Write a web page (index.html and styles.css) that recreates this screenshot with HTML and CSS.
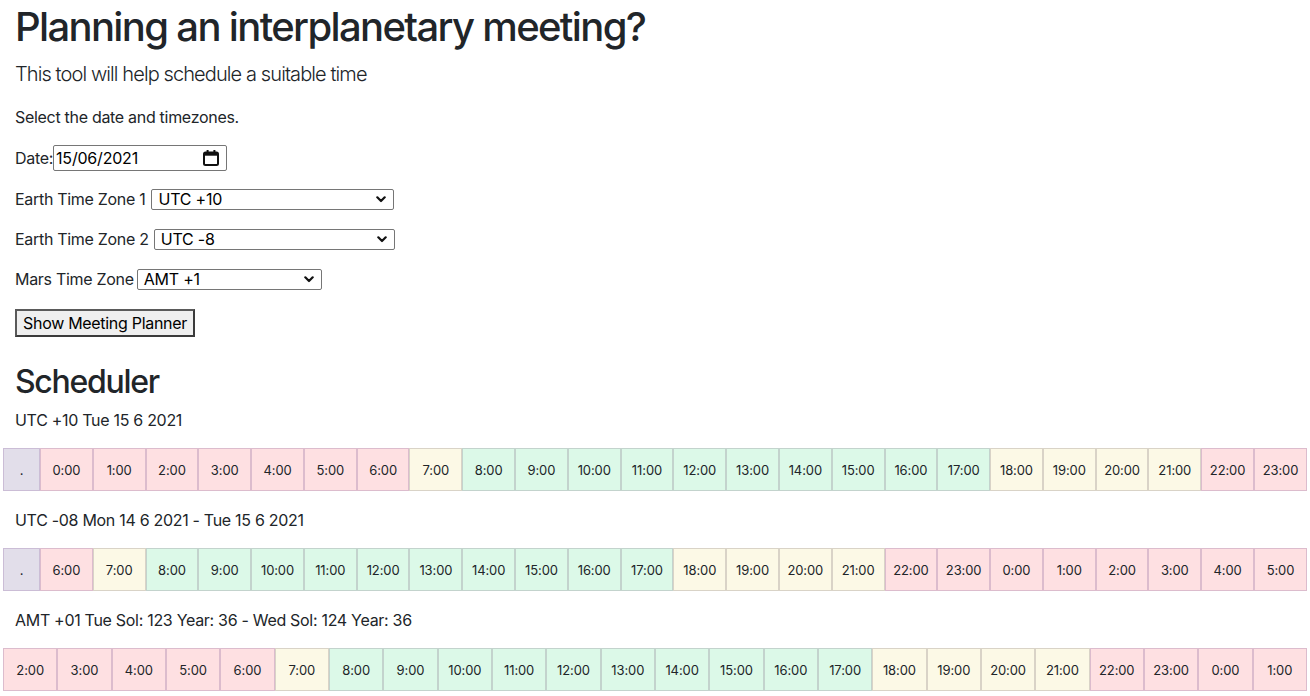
FILE: index.html
```html
<!DOCTYPE html>
<html lang="en">
<head>
<meta charset="utf-8">
<title>Interplanetary Meeting Planner</title>
<link rel="stylesheet" href="styles.css">
</head>
<body>
<main class="page">
  <section class="intro">
    <h1 class="title">Planning an interplanetary meeting?</h1>
    <p class="lead">This tool will help schedule a suitable time</p>
    <p class="text">Select the date and timezones.</p>
    <p class="field field-date"><span class="label">Date:</span><span class="date-input"><span class="date-value">15/06/2021</span><svg class="cal" width="18" height="18" viewBox="0 0 18 18"><rect x="2" y="3.5" width="14" height="12.5" rx="1.5" fill="none" stroke="#111" stroke-width="2"/><rect x="2" y="3.5" width="14" height="3.2" fill="#111"/><rect x="4.6" y="1" width="2" height="3.5" fill="#111"/><rect x="11.4" y="1" width="2" height="3.5" fill="#111"/></svg></span></p>
    <p class="field field-tz1"><span class="label">Earth Time Zone 1</span><span class="select sel-1"><span class="sel-value">UTC +10</span><svg class="chev" width="10" height="7" viewBox="0 0 10 7"><path d="M1.3 1.3 L5 5 L8.7 1.3" fill="none" stroke="#111" stroke-width="2.2" stroke-linecap="round" stroke-linejoin="round"/></svg></span></p>
    <p class="field"><span class="label">Earth Time Zone 2</span><span class="select sel-2"><span class="sel-value">UTC -8</span><svg class="chev" width="10" height="7" viewBox="0 0 10 7"><path d="M1.3 1.3 L5 5 L8.7 1.3" fill="none" stroke="#111" stroke-width="2.2" stroke-linecap="round" stroke-linejoin="round"/></svg></span></p>
    <p class="field field-mars"><span class="label">Mars Time Zone</span><span class="select sel-3"><span class="sel-value">AMT +1</span><svg class="chev" width="10" height="7" viewBox="0 0 10 7"><path d="M1.3 1.3 L5 5 L8.7 1.3" fill="none" stroke="#111" stroke-width="2.2" stroke-linecap="round" stroke-linejoin="round"/></svg></span></p>
    <p class="field field-btn"><button class="btn" type="button">Show Meeting Planner</button></p>
  </section>

  <section class="scheduler">
    <h2 class="sub">Scheduler</h2>
    <p class="text row-label">UTC +10 Tue 15 6 2021</p>
    <table class="hours with-dot">
      <tr>
        <td class="dot">.</td>
        <td class="r">0:00</td><td class="r">1:00</td><td class="r">2:00</td><td class="r">3:00</td><td class="r">4:00</td><td class="r">5:00</td><td class="r">6:00</td>
        <td class="y">7:00</td>
        <td class="g">8:00</td><td class="g">9:00</td><td class="g">10:00</td><td class="g">11:00</td><td class="g">12:00</td><td class="g">13:00</td><td class="g">14:00</td><td class="g">15:00</td><td class="g">16:00</td><td class="g">17:00</td>
        <td class="y">18:00</td><td class="y">19:00</td><td class="y">20:00</td><td class="y">21:00</td>
        <td class="r">22:00</td><td class="r">23:00</td>
      </tr>
    </table>
    <p class="text row-label">UTC -08 Mon 14 6 2021 - Tue 15 6 2021</p>
    <table class="hours with-dot">
      <tr>
        <td class="dot">.</td>
        <td class="r">6:00</td>
        <td class="y">7:00</td>
        <td class="g">8:00</td><td class="g">9:00</td><td class="g">10:00</td><td class="g">11:00</td><td class="g">12:00</td><td class="g">13:00</td><td class="g">14:00</td><td class="g">15:00</td><td class="g">16:00</td><td class="g">17:00</td>
        <td class="y">18:00</td><td class="y">19:00</td><td class="y">20:00</td><td class="y">21:00</td>
        <td class="r">22:00</td><td class="r">23:00</td><td class="r">0:00</td><td class="r">1:00</td><td class="r">2:00</td><td class="r">3:00</td><td class="r">4:00</td><td class="r">5:00</td>
      </tr>
    </table>
    <p class="text row-label">AMT +01 Tue Sol: 123 Year: 36 - Wed Sol: 124 Year: 36</p>
    <table class="hours">
      <tr>
        <td class="r">2:00</td><td class="r">3:00</td><td class="r">4:00</td><td class="r">5:00</td><td class="r">6:00</td>
        <td class="y">7:00</td>
        <td class="g">8:00</td><td class="g">9:00</td><td class="g">10:00</td><td class="g">11:00</td><td class="g">12:00</td><td class="g">13:00</td><td class="g">14:00</td><td class="g">15:00</td><td class="g">16:00</td><td class="g">17:00</td>
        <td class="y">18:00</td><td class="y">19:00</td><td class="y">20:00</td><td class="y">21:00</td>
        <td class="r">22:00</td><td class="r">23:00</td><td class="r">0:00</td><td class="r">1:00</td>
      </tr>
    </table>
  </section>
</main>
</body>
</html>
```

FILE: styles.css
```css
* { box-sizing: border-box; }

html, body {
  margin: 0;
  padding: 0;
  background: #fff;
}

body {
  font-family: Inter, "Liberation Sans", Arial, sans-serif;
  font-size: 16px;
  line-height: 24px;
  color: #212529;
}

.page {
  padding: 3px;
}

.intro,
.sub,
.row-label {
  padding-left: 12px;
}

.title {
  margin: 0 0 8px;
  font-size: 40px;
  line-height: 48px;
  font-weight: 500;
  letter-spacing: -1.65px;
}

.lead {
  margin: 0 0 16px;
  font-size: 20px;
  line-height: 30px;
  font-weight: 300;
  letter-spacing: -0.9px;
}

.text {
  margin: 0 0 16px;
  font-size: 16px;
  line-height: 24px;
  letter-spacing: -0.3px;
}

.field {
  margin: 0 0 16px;
  display: flex;
  align-items: center;
  gap: 5px;
  min-height: 24px;
  letter-spacing: -0.3px;
  color: #212529;
}

.field-date { gap: 0; }
.field-tz1 { gap: 6px; }
.field-mars { gap: 3px; }

.field-btn { min-height: 32px; }

.date-input {
  display: flex;
  align-items: center;
  justify-content: space-between;
  width: 174px;
  height: 26px;
  border: 1px solid #767676;
  border-radius: 2px;
  padding: 0 6px 0 2px;
  color: #000;
  letter-spacing: -0.2px;
}

.cal { display: block; }

.select {
  display: flex;
  align-items: center;
  justify-content: space-between;
  height: 21px;
  border: 1px solid #767676;
  border-radius: 2px;
  padding: 0 7px 0 6px;
  color: #000;
  letter-spacing: -0.2px;
  line-height: 19px;
}

.sel-1 { width: 243px; }
.sel-2 { width: 241px; }
.sel-3 { width: 185px; }

.chev { display: block; }

.btn {
  font-family: inherit;
  font-size: 16px;
  line-height: 22px;
  letter-spacing: -0.3px;
  color: #000;
  background: #efefef;
  border: 2px solid #3b3b3b;
  border-top-color: #5a5a5a;
  border-left-color: #5a5a5a;
  border-radius: 0;
  padding: 1px 6px;
  height: 28px;
}

.scheduler {
  margin-top: 24px;
}

.sub {
  margin: 0 0 7px;
  font-size: 32px;
  line-height: 38px;
  font-weight: 500;
  letter-spacing: -1.3px;
}

.hours {
  width: 100%;
  table-layout: fixed;
  border-collapse: separate;
  border-spacing: 0;
  margin: 0 0 17px;
}

.hours td {
  height: 43px;
  padding: 0;
  text-align: center;
  font-size: 13px;
  color: #212529;
  border-width: 1px;
  border-style: solid;
  letter-spacing: -0.1px;
}

.with-dot .dot { width: 37px; }

.hours .dot { background: #e2deea; border-color: #cbbdd6; }
.hours .r { background: #fee0e2; border-color: #dcbccd; }
.hours .y { background: #fcf9e6; border-color: #d9d3c7; }
.hours .g { background: #dcf9e8; border-color: #c3d3cd; }
```
